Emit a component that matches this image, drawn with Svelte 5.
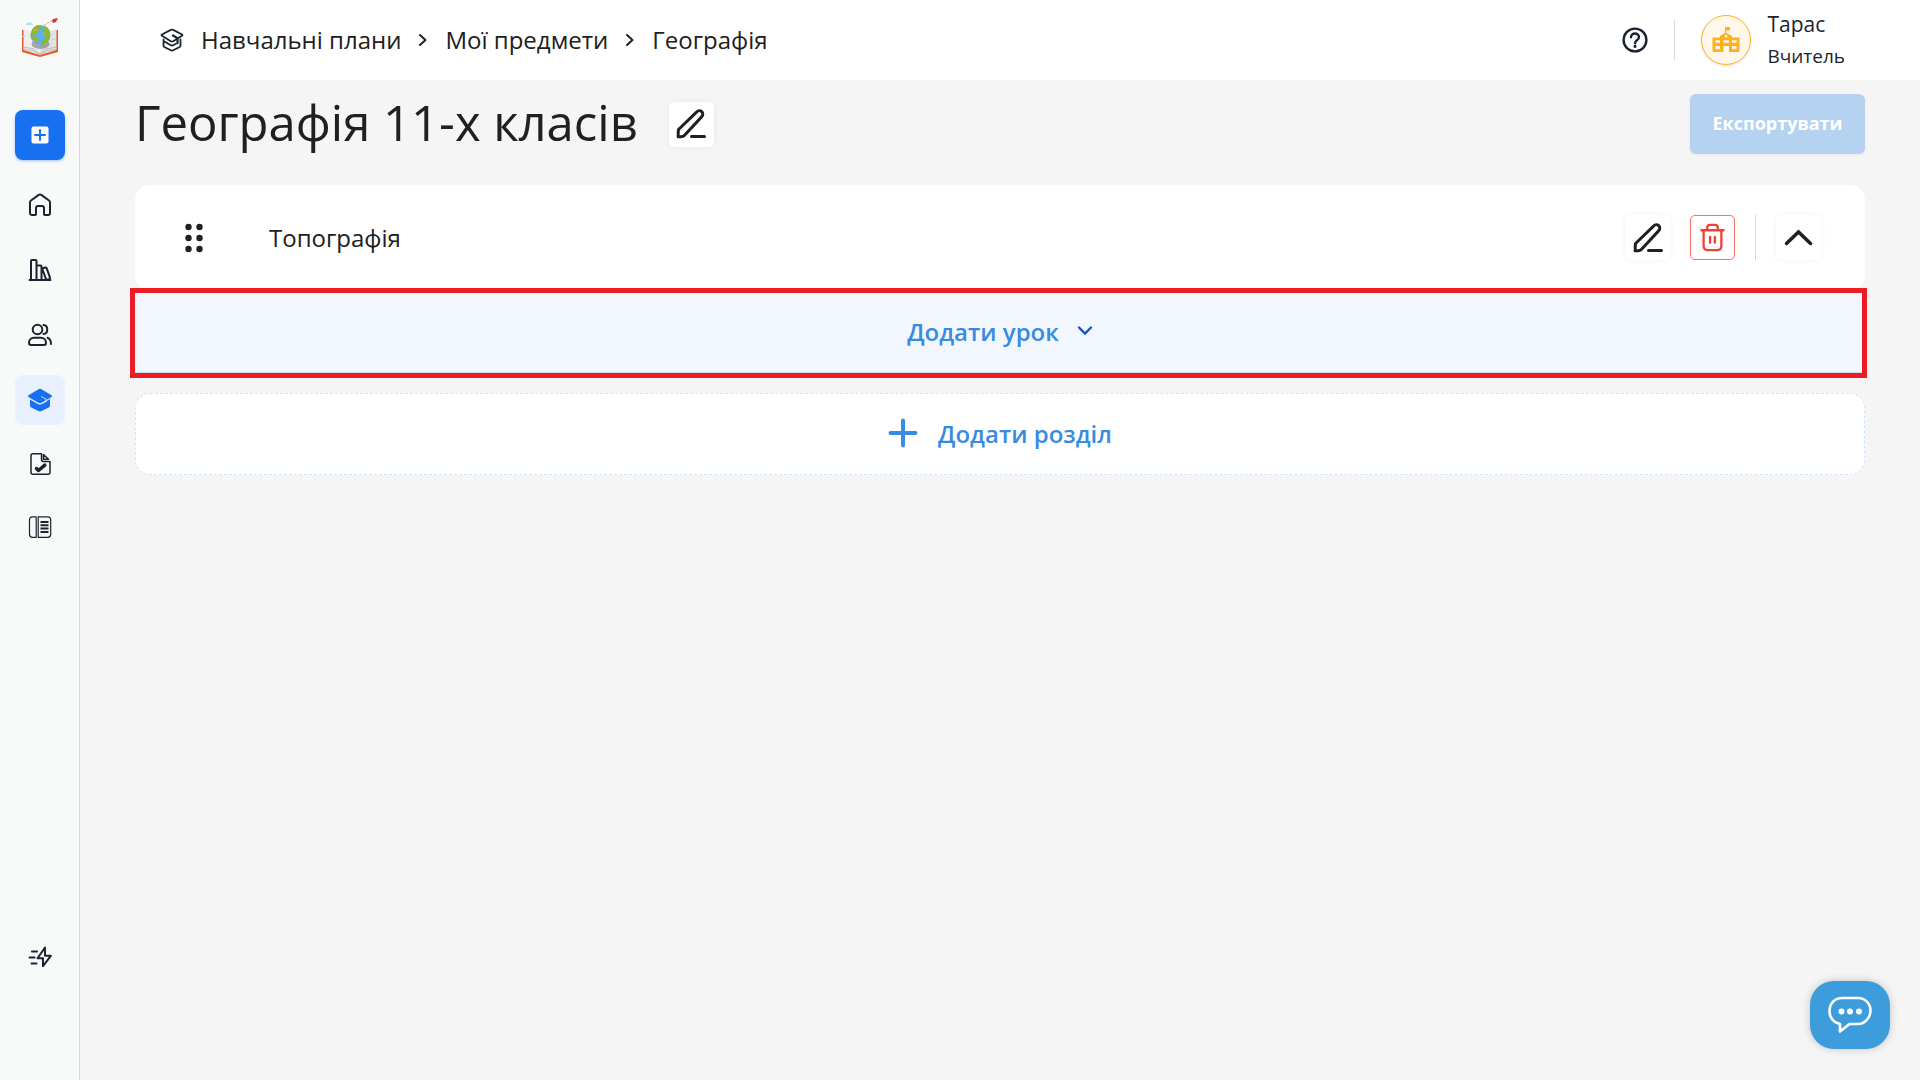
<script>
	const crumbs = ['Навчальні плани', 'Мої предмети', 'Географія'];
	const dots = [4, 15, 26];

	let title = $state('Географія 11-х класів');
	let sections = $state([{ id: 1, name: 'Топографія' }]);
</script>

{#snippet pencil()}
	<svg width="30" height="30" viewBox="0 0 30 30" fill="none" stroke="currentColor" stroke-width="3" stroke-linecap="round" stroke-linejoin="round">
		<path d="M2.5 20.5 20.8 2.8a3.4 3.4 0 0 1 5 4.8L8.6 26.3c-1 1.1-2.2 1.5-3.6 1.5H2.2v-3.6c0-1.5.2-2.6.3-3.7Z" />
		<path d="M15.5 27.5h13" />
	</svg>
{/snippet}

{#snippet next()}
	<svg width="10" height="14" viewBox="0 0 10 14" fill="none" stroke="currentColor" stroke-width="2" stroke-linecap="round" stroke-linejoin="round">
		<path d="m2 2 5.5 5L2 12" />
	</svg>
{/snippet}

<div class="app">
	<aside class="sidebar">
		<a class="logo" href="#start" aria-label="Початок">
			<svg width="40" height="42" viewBox="0 0 40 42">
				<path d="M2 12h2l14 5h4l14-5h2v22l-18 5L2 34Z" fill="#e9572b" />
				<path d="M3.5 11 20 17v20L3.5 32Z" fill="#ededed" />
				<path d="M36.5 11 20 17v20l16.5-5Z" fill="#e2e2e2" />
				<path d="M3.5 29 14 31l6 5 6-5 10.5-2M3.5 31 14 33l6 4 6-4 10.5-2" fill="none" stroke="#bdbdbd" />
				<ellipse cx="20.5" cy="26" rx="9" ry="5" fill="#777" opacity=".6" />
				<circle cx="20.5" cy="17" r="10" fill="#5fb2e2" />
				<path d="M12 12c1-3 4-5 7-5l3 2-3 2-2 4-4 2-2 3c-1-3 0-5 1-8ZM12 19l4-1 2 3-2 4c-2-1-4-3-4-6ZM25 8c4 2 6 6 5 11-1 4-4 7-8 8l-1-3 4-3 1-5-3-3Z" fill="#8cba27" />
				<path d="m14 13 4-2M23 15l2 2M13 22l2 1" stroke="#d7a34b" stroke-width="1.5" />
				<path d="M24 7 32 3" stroke="#df9b7c" stroke-dasharray="2 1.5" />
				<path d="m32 3 1-2 5-1-2 4-3 1Z" fill="#cf3c2a" />
				<path d="M6 6q1-2 2-1 2-2 3 0 2 0 2 2H6ZM1 19q1-2 2-1 2-1 3 1ZM31 22q1-2 2-1 2-2 3 1Z" fill="#b4dcf0" />
			</svg>
		</a>

		<button class="create" aria-label="Створити">
			<svg width="18" height="18" viewBox="0 0 18 18">
				<rect x=".5" y=".5" width="17" height="17" rx="2" fill="#fff" />
				<path d="M9 4v10M4 9h10" stroke="#1670f0" stroke-width="2" stroke-linecap="round" />
			</svg>
		</button>

		<nav class="menu">
			<a class="item" href="#home" aria-label="Головна">
				<svg width="24" height="24" viewBox="0 0 24 24" fill="none" stroke="currentColor" stroke-width="2" stroke-linejoin="round" stroke-linecap="round">
					<path d="M2 9.5c0-.8.3-1.5 1-2l7.7-5.6c.8-.6 1.8-.6 2.6 0L21 7.5c.7.5 1 1.2 1 2V20c0 1.1-.7 2-1.8 2h-3.4c-.6 0-.8-.4-.8-1v-6c0-1.3-.7-2-2-2h-4c-1.3 0-2 .7-2 2v6c0 .6-.2 1-.8 1H3.8C2.7 22 2 21.1 2 20Z" />
				</svg>
			</a>
			<a class="item" href="#library" aria-label="Бібліотека">
				<svg width="24" height="24" viewBox="0 0 24 24" fill="none" stroke="currentColor" stroke-width="2" stroke-linejoin="round" stroke-linecap="round">
					<path d="M3 22V2.8Q3 2 4 2h3.5Q8.5 2 8.5 3v19M8.5 7.5h4q1 0 1 1V22M14.5 11.5q-.3-.9.5-1.2l2.4-.8q.8-.2 1.2.6l3.4 9.6q.2.8-.6 1.2l-2.2.8q-.9.2-1.2-.6ZM1.5 22h21" />
				</svg>
			</a>
			<a class="item" href="#people" aria-label="Люди">
				<svg width="24" height="24" viewBox="0 0 24 24" fill="none" stroke="currentColor" stroke-width="2" stroke-linecap="round" stroke-linejoin="round">
					<circle cx="9.5" cy="6.5" r="4.8" />
					<path d="M15.5 2c5 .5 5 8.5 0 9" />
					<path d="M6 14.8h7c3 0 5 2.2 5 5 0 1.2-.7 2.2-2 2.2H3c-1.3 0-2-1-2-2.2 0-2.8 2-5 5-5ZM19.5 14.8c2 .7 3.5 3.2 3.5 6.2" />
				</svg>
			</a>
			<a class="item active" href="#plans" aria-label="Навчальні плани">
				<svg width="26" height="24" viewBox="0 0 26 24" fill="currentColor">
					<path d="M11.5 1.2q1.5-.7 3 0l10 6q1.3.8 0 1.8l-9.8 5.8q-1.7.7-3.4 0L1.5 9q-1.3-1 0-1.8Z" />
					<path d="m3 11 8 4.7q2 .9 4 0l8-4.7v6.5q0 1.3-1.2 2L14.5 23q-1.5.7-3 0l-7.3-3.5q-1.2-.7-1.2-2Z" />
					<path d="m2 10.5 9 5.2q2 .8 4 0l3-1.7M14 8.5l5 2.5v3M18 13.5l1 1" fill="none" stroke="#e8f0fd" stroke-width=".8" />
				</svg>
			</a>
		</nav>

		<nav class="menu tools">
			<a class="item" href="#tasks" aria-label="Завдання">
				<svg width="24" height="24" viewBox="0 0 24 24" fill="none" stroke="currentColor" stroke-width="1.5" stroke-linejoin="round" stroke-linecap="round">
					<path d="M13.5 1.8H5Q3 1.8 3 3.8v16.5q0 2 2 2h15q2 0 2-2V9.5h-6.5q-2 0-2-2ZM15.5 2.5v4.8h5Z" />
					<path d="m8.5 16.5 2 2 6.3-5.3" stroke-width="3.5" />
				</svg>
			</a>
			<a class="item" href="#journal" aria-label="Журнал">
				<svg width="24" height="24" viewBox="0 0 24 24" fill="none" stroke="currentColor" stroke-width="1.2" stroke-linejoin="round">
					<path d="M8.2 1.8H4.5q-3 0-3 3v14.5q0 3 3 3h3.7ZM10.2 1.8h9.5q3 0 3 3v14.5q0 3-3 3h-9.5Z" />
					<path d="M12.5 7h8M12.5 10.3h8M12.5 13.6h8M12.5 16.9h8" stroke-width="2" />
				</svg>
			</a>
		</nav>

		<a class="item quick" href="#quick" aria-label="Швидкі дії">
			<svg width="24" height="24" viewBox="0 0 24 24" fill="none" stroke="currentColor" stroke-width="2" stroke-linecap="round" stroke-linejoin="round">
				<path d="m17 2.5-7.5 10.7H15v8l7.8-10.4H17Z" />
				<path d="M4 6.5h5M1.5 12.5h5M3.5 18.5h5" />
			</svg>
		</a>
	</aside>

	<div class="page">
		<header class="topbar">
			<nav class="crumbs" aria-label="Шлях">
				<svg width="24" height="24" viewBox="0 0 24 24" fill="none" stroke="#1c2330" stroke-width="1.8" stroke-linejoin="round" stroke-linecap="round">
					<path d="M10.8 1.9q1.2-.7 2.4 0l8.8 4.6q1 .6 0 1.2l-8.8 5.6q-1.2.7-2.4 0L2 7.7q-1-.6 0-1.2Z" />
					<path d="M3.5 11.500v6q0 1 .8 1.500l6.500 3.300q1.200.6 2.400 0l6.500-3.300q.8-.5.8-1.500v-6M3.500 13l7.300 4.200q1.200.6 2.400 0l2.800-1.500" />
					<path d="m13 7.500 4.500 2.700v5" stroke-width="2.2" />
				</svg>
				{#each crumbs as crumb, i}
					{#if i > 0}{@render next()}{/if}
					<a href="#crumb{i}">{crumb}</a>
				{/each}
			</nav>

			<div class="account">
				<button class="help" aria-label="Допомога">
					<svg width="26" height="26" viewBox="0 0 26 26" fill="none" stroke="#1c2330" stroke-width="2.4" stroke-linecap="round">
						<circle cx="13" cy="13" r="11.4" />
						<path d="M9 10.2c0-5 8-5 8 0 0 3-4 3.2-4 6" />
						<path d="M13 19.3v.2" stroke-width="3" />
					</svg>
				</button>
				<a class="user" href="#profile">
					<span class="avatar">
						<svg width="28" height="28" viewBox="0 0 28 28">
							<path fill="#ffb020" fill-rule="evenodd" d="M13 1h5v3.500h-3.700V7l5.700 3v1.500h7.500V26H17v-6h-5.500v6H.5V11.500H8V10l5-3ZM14 8.700a1.400 1.400 0 1 0 .1 0ZM3.500 14.200v2.600H8v-2.600Zm8 0v2.600H17v-2.600Zm8.500 0v2.600h4.500v-2.600ZM3.500 20v3.200H8V20ZM20 20v3.200h4.500V20Z" />
						</svg>
					</span>
					<span class="who">
						<span class="name">Тарас</span>
						<span class="role">Вчитель</span>
					</span>
				</a>
			</div>
		</header>

		<main>
			<div class="heading">
				<h1>{title}</h1>
				<button class="square" aria-label="Редагувати назву">{@render pencil()}</button>
				<button class="export" disabled>Експортувати</button>
			</div>

			{#each sections as section (section.id)}
				<section>
					<div class="card">
						<button class="drag" aria-label="Перемістити">
							<svg width="20" height="30" viewBox="0 0 20 30" fill="currentColor">
								{#each dots as y}
									<circle cx="4.5" cy={y} r="3.2" />
									<circle cx="15.5" cy={y} r="3.2" />
								{/each}
							</svg>
						</button>
						<h2>{section.name}</h2>
						<div class="actions">
							<button class="square" aria-label="Редагувати розділ">{@render pencil()}</button>
							<button class="square delete" aria-label="Видалити розділ">
								<svg width="27" height="29" viewBox="0 0 28 30" fill="none" stroke="currentColor" stroke-width="2.4" stroke-linecap="round" stroke-linejoin="round">
									<path d="M2.5 7.5h23M4.8 7.5v16.700c0 2.600 1.200 3.800 3.800 3.800h10.800c2.600 0 3.800-1.200 3.800-3.800V7.500M8.500 7V5c0-2 1-3 3-3h5c2 0 3 1 3 3v2M11.500 14.500v6M16.500 14.500v6" />
								</svg>
							</button>
							<span class="line"></span>
							<button class="square" aria-label="Згорнути розділ">
								<svg width="29" height="17" viewBox="0 0 29 17" fill="none" stroke="currentColor" stroke-width="3.5" stroke-linecap="round">
									<path d="M2.5 14.5 14.500 3l12 11.500" />
								</svg>
							</button>
						</div>
					</div>
					<button class="add-lesson">
						Додати урок
						<svg width="16" height="12" viewBox="0 0 16 12" fill="none" stroke="#1553c7" stroke-width="2.4" stroke-linecap="round">
							<path d="m2 2.5 6 6 6-6" />
						</svg>
					</button>
				</section>
			{/each}

			<button class="add-section">
				<svg width="30" height="30" viewBox="0 0 30 30" fill="none" stroke="currentColor" stroke-width="4" stroke-linecap="round">
					<path d="M15 2.5v25M2.5 15h25" />
				</svg>
				Додати розділ
			</button>
		</main>
	</div>

	<button class="chat" aria-label="Чат">
		<svg width="44" height="38" viewBox="0 0 44 38" fill="none" stroke="#fff" stroke-width="2.6" stroke-linejoin="round">
			<path d="M14 2h16c7 0 12.5 5.5 12.5 12.5S37 28 30 28h-8.5L12 35.5V28C5.5 27 1.5 21.5 1.5 15 1.5 7.5 7 2 14 2Z" />
			<g fill="#fff" stroke="none">
				<circle cx="13.5" cy="15.5" r="3" />
				<circle cx="22" cy="15.5" r="3" />
				<circle cx="31" cy="15.5" r="3" />
			</g>
		</svg>
	</button>
</div>

<style>
	:global(body) {
		background: #f5f5f5;
	}
	.app {
		display: flex;
		min-height: 100vh;
		font-family: 'Open Sans', 'Noto Sans', sans-serif;
		color: #202020;
	}
	button {
		font-family: inherit;
		border: 0;
		padding: 0;
		background: none;
		color: inherit;
		cursor: pointer;
	}
	a {
		color: inherit;
		text-decoration: none;
	}
	svg {
		display: block;
		flex: none;
	}
	.sidebar {
		box-sizing: border-box;
		width: 80px;
		flex: none;
		display: flex;
		flex-direction: column;
		align-items: center;
		padding: 18px 0 98px;
		background: #f8faf9;
		border-right: 1px solid #d8dada;
		color: #1c2330;
	}
	.logo {
		height: 92px;
	}
	.create {
		width: 50px;
		height: 50px;
		display: grid;
		place-items: center;
		background: #1670f0;
		border-radius: 8px;
		box-shadow: 0 1px 3px rgba(22, 112, 240, 0.4);
	}
	.menu {
		display: flex;
		flex-direction: column;
		gap: 15px;
		margin-top: 20px;
	}
	.tools {
		gap: 13px;
		margin-top: 14px;
	}
	.item {
		width: 50px;
		height: 50px;
		display: grid;
		place-items: center;
		border-radius: 8px;
	}
	.active {
		background: #e8f0fd;
		color: #1670f0;
	}
	.quick {
		margin-top: auto;
	}
	.page {
		flex: 1;
		min-width: 0;
	}
	.topbar {
		box-sizing: border-box;
		height: 80px;
		display: flex;
		align-items: center;
		justify-content: space-between;
		padding: 0 75px 1px 80px;
		background: #fff;
	}
	.crumbs {
		display: flex;
		align-items: center;
		gap: 17px;
		font-size: 24px;
		line-height: 32px;
	}
	.account {
		display: flex;
		align-items: center;
	}
	.help {
		padding-right: 26px;
	}
	.user {
		display: flex;
		align-items: center;
		gap: 16px;
		padding-left: 27px;
		position: relative;
	}
	.user::before {
		content: '';
		position: absolute;
		left: 0;
		height: 40px;
		width: 1px;
		background: #d8d8d8;
	}
	.avatar {
		box-sizing: border-box;
		width: 50px;
		height: 50px;
		display: grid;
		place-items: center;
		border: 1px solid #ffb020;
		border-radius: 50%;
		background: #fff8ea;
		box-shadow: 0 1px 3px rgba(0, 0, 0, 0.1);
	}
	.who {
		display: flex;
		flex-direction: column;
		line-height: 32px;
		color: #1c2330;
	}
	.name {
		font-size: 21px;
	}
	.role {
		font-size: 19px;
	}
	main {
		padding: 14px 55px 0;
	}
	.heading {
		display: flex;
		align-items: center;
		height: 60px;
		margin-bottom: 31px;
	}
	h1 {
		margin: 0 31px 4px 0;
		font-size: 49px;
		line-height: 56px;
		font-weight: 400;
	}
	.square {
		box-sizing: border-box;
		width: 45px;
		height: 45px;
		display: grid;
		place-items: center;
		background: #fff;
		border-radius: 5px;
		box-shadow: 0 0 6px rgba(0, 0, 0, 0.06);
	}
	.export {
		width: 175px;
		height: 60px;
		margin-left: auto;
		padding-bottom: 2px;
		background: #b5d2f1;
		border-radius: 6px;
		color: #fff;
		font-size: 18px;
		font-weight: 700;
		box-shadow: 0 1px 3px rgba(0, 0, 0, 0.06);
	}
	.card {
		height: 105px;
		display: flex;
		align-items: center;
		padding: 0 44px 0 49px;
		background: #fff;
		border-radius: 15px;
	}
	h2 {
		margin: 0 0 0 65px;
		font-size: 24px;
		line-height: 32px;
		font-weight: 400;
	}
	.actions {
		display: flex;
		gap: 20px;
		margin-left: auto;
	}
	.delete {
		border: 1px solid #f7706b;
		color: #ef4236;
		box-shadow: none;
	}
	.line {
		width: 1px;
		background: #d8d8d8;
	}
	.add-lesson {
		box-sizing: border-box;
		position: relative;
		width: 100%;
		height: 83px;
		display: flex;
		align-items: center;
		justify-content: center;
		gap: 18px;
		background: #f2f7ff;
		border-bottom: 1px solid #c5dcef;
		color: #398be0;
		font-size: 24px;
		font-weight: 600;
	}
	.add-lesson::after {
		content: '';
		position: absolute;
		inset: -2px -2px -6px -5px;
		border: 5px solid #ed1c24;
	}
	.add-section {
		width: 100%;
		height: 82px;
		display: flex;
		align-items: center;
		justify-content: center;
		gap: 20px;
		margin-top: 20px;
		padding-bottom: 2px;
		background: #fff;
		border: 1px dashed #cfe5fa;
		border-radius: 15px;
		color: #398be0;
		font-size: 24px;
		font-weight: 600;
	}
	.chat {
		position: fixed;
		right: 30px;
		bottom: 31px;
		width: 80px;
		height: 68px;
		display: grid;
		place-items: center;
		background: #3d9cdc;
		border-radius: 24px;
		box-shadow: 0 0 8px rgba(0, 0, 0, 0.2);
	}
</style>
